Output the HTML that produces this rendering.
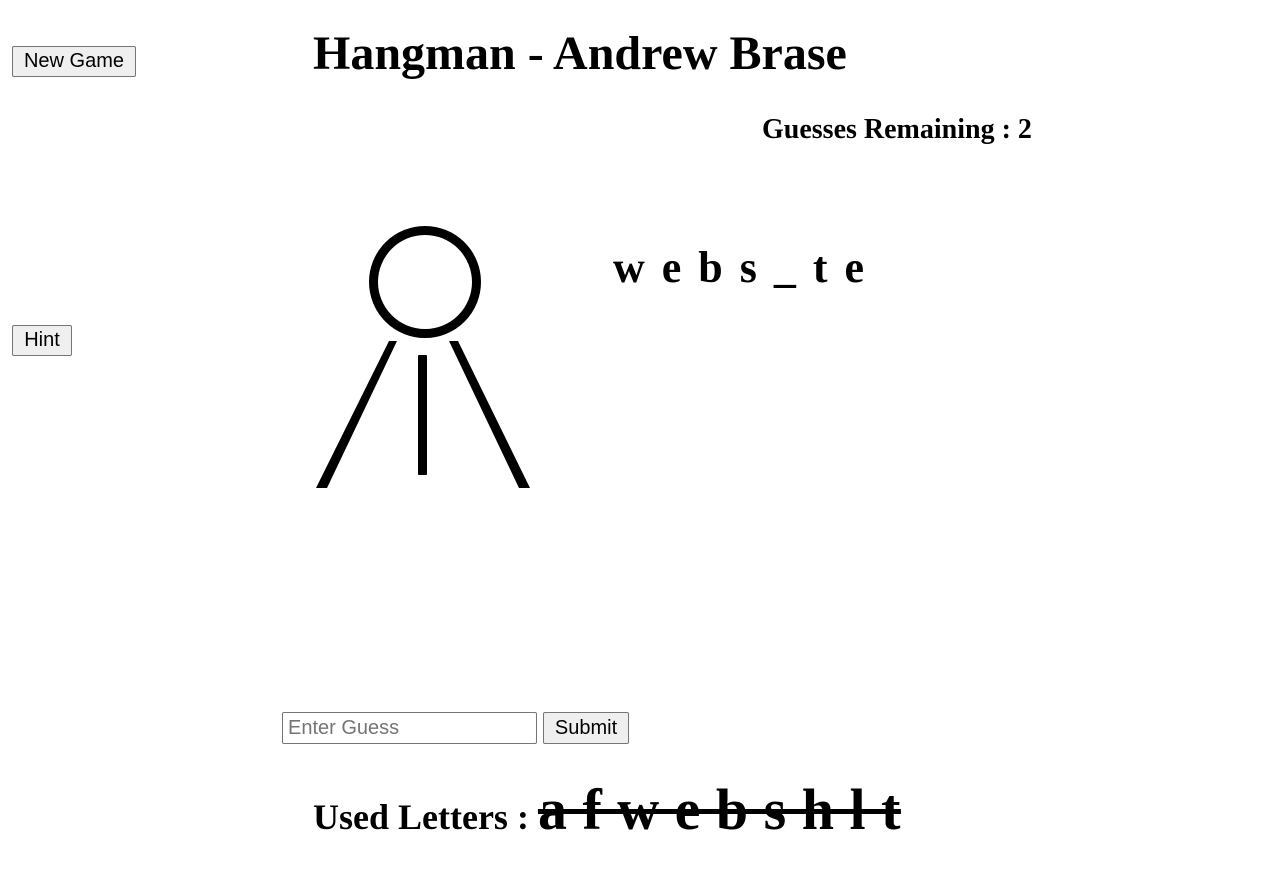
<!DOCTYPE html>
<html><head><style>
body{margin:0;width:1275px;height:882px;position:relative;background:#fff;font-family:"Liberation Serif",serif;overflow:hidden}
.abs{position:absolute;white-space:nowrap}
button{position:absolute;font-family:"Liberation Sans",sans-serif;font-size:20px;background:#efefef;border:1px solid #767676;border-radius:2px;padding:0;color:#000}
input{position:absolute;font-family:"Liberation Sans",sans-serif;font-size:20px;border:1px solid #767676;border-radius:2px;padding:0 5px;box-sizing:border-box}
input::placeholder{color:#757575}
</style></head><body>
<button style="left:12px;top:46px;width:124px;height:31px">New Game</button>
<button style="left:12px;top:325px;width:60px;height:31px">Hint</button>
<div class="abs" style="left:313px;top:26px;font-size:48px;font-weight:bold;line-height:56px">Hangman - Andrew Brase</div>
<div class="abs" style="left:762px;top:114px;font-size:28px;font-weight:bold;line-height:32px">Guesses Remaining : 2</div>
<div class="abs" style="left:613px;top:242px;font-size:44px;font-weight:bold;line-height:52px;word-spacing:6px">w e b s _ t e</div>
<svg class="abs" style="left:0;top:0" width="1275" height="882">
<circle cx="425" cy="282" r="51.5" fill="none" stroke="#000" stroke-width="9"/>
<polygon points="389,341 397,341 327,488 316,488" fill="#000"/>
<polygon points="449,341 458,341 530,488 519,488" fill="#000"/>
<rect x="418" y="355" width="9" height="120" rx="1" fill="#000"/>
</svg>
<input style="left:282px;top:712px;width:255px;height:32px" placeholder="Enter Guess">
<button style="left:543px;top:712px;width:86px;height:32px">Submit</button>
<div class="abs" style="left:313px;top:784px;font-size:36px;font-weight:bold;line-height:52px">Used Letters : <span style="font-size:58px;letter-spacing:0.5px;text-decoration:line-through;text-decoration-thickness:5px">a f w e b s h l t</span></div>
</body></html>
